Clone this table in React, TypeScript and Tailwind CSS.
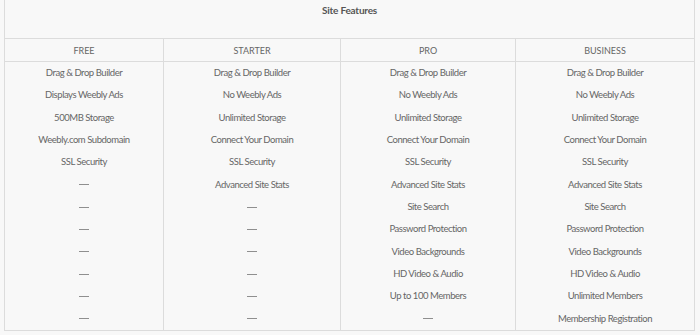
import React from "react";

const plans = ["FREE", "STARTER", "PRO", "BUSINESS"];

const rows: string[][] = [
  ["Drag & Drop Builder", "Drag & Drop Builder", "Drag & Drop Builder", "Drag & Drop Builder"],
  ["Displays Weebly Ads", "No Weebly Ads", "No Weebly Ads", "No Weebly Ads"],
  ["500MB Storage", "Unlimited Storage", "Unlimited Storage", "Unlimited Storage"],
  ["Weebly.com Subdomain", "Connect Your Domain", "Connect Your Domain", "Connect Your Domain"],
  ["SSL Security", "SSL Security", "SSL Security", "SSL Security"],
  ["—", "Advanced Site Stats", "Advanced Site Stats", "Advanced Site Stats"],
  ["—", "—", "Site Search", "Site Search"],
  ["—", "—", "Password Protection", "Password Protection"],
  ["—", "—", "Video Backgrounds", "Video Backgrounds"],
  ["—", "—", "HD Video & Audio", "HD Video & Audio"],
  ["—", "—", "Up to 100 Members", "Unlimited Members"],
  ["—", "—", "—", "Membership Registration"],
];

const App = () => {
  return (
    <div
      className="w-[700px] h-[335px] bg-[#f8f8f8] overflow-hidden"
      style={{ fontFamily: "Lato, 'Liberation Sans', sans-serif" }}
    >
      <div className="ml-[4px] w-[691px] border-x border-[#dcdcdc] text-[#666666]">
        {/* title */}
        <div className="h-[38px] pt-[3px] text-center text-[10px] font-bold tracking-[-0.2px] text-[#555555]">
          Site Features
        </div>

        <div className="grid grid-cols-[159px_177px_175px_1fr] border-y border-[#dcdcdc]">
          {plans.map((p, i) => (
            <div
              key={p}
              className={`h-[22px] pt-px flex items-center justify-center text-[9px] ${
                i < 3 ? "border-r border-[#dcdcdc]" : ""
              }`}
            >
              {p}
            </div>
          ))}
        </div>

        {/* feature columns */}
        <div className="grid grid-cols-[159px_177px_175px_1fr] border-b border-[#dcdcdc]">
          {plans.map((p, c) => (
            <div key={p} className={c < 3 ? "border-r border-[#dcdcdc]" : ""}>
              {rows.map((r, i) => (
                <div
                  key={i}
                  className="h-[22.33px] flex items-center justify-center text-[9.5px] tracking-[-0.45px]"
                >
                  {r[c] === "—" ? (
                    <span className="block w-[10px] h-px bg-[#8f8f8f]" />
                  ) : (
                    r[c]
                  )}
                </div>
              ))}
            </div>
          ))}
        </div>
      </div>
    </div>
  );
};

export default App;
